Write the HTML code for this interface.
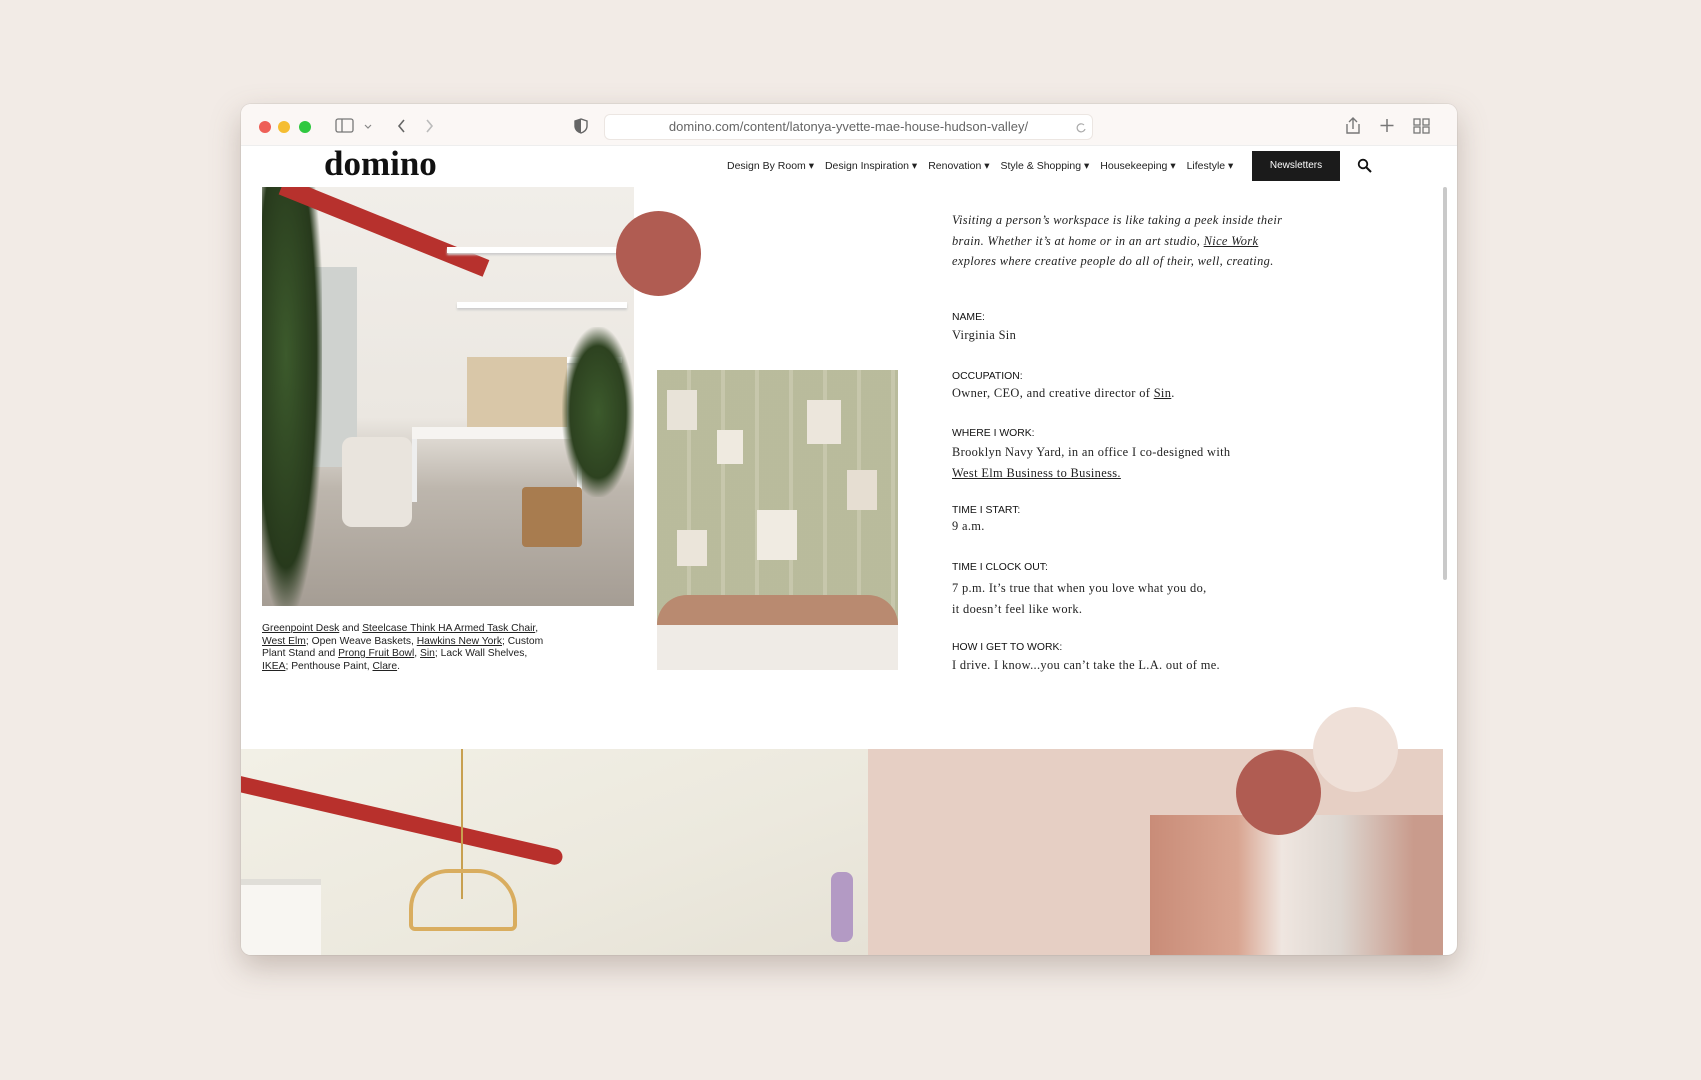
<!DOCTYPE html>
<html><head><meta charset="utf-8"><style>
*{margin:0;padding:0;box-sizing:border-box}
body{width:1701px;height:1080px;background:#f2ebe6;position:relative;overflow:hidden;font-family:"Liberation Sans",sans-serif}
.win{position:absolute;left:241px;top:104px;width:1216px;height:851px;background:#fff;border-radius:10px;overflow:hidden;box-shadow:0 12px 30px rgba(120,100,90,.35),0 0 0 1px rgba(0,0,0,.05)}
.bar{position:absolute;left:0;top:0;width:100%;height:42px;background:#fbf7f5;border-bottom:1px solid #eee}
.dot{position:absolute;top:17px;width:12px;height:12px;border-radius:50%}
.url{position:absolute;left:363px;top:10px;width:489px;height:26px;border-radius:6px;background:#fff;border:1px solid #ece6e2;font-size:13px;color:#666;text-align:center;line-height:24px}
.abs{position:absolute}
.logo{position:absolute;left:83px;top:40px;font-family:"Liberation Serif",serif;font-weight:bold;font-size:35px;color:#111;letter-spacing:0px}
.nav{position:absolute;top:56px;font-size:10.5px;color:#222;white-space:nowrap}
.nav span{margin-right:11px}
.nl{position:absolute;left:1011px;top:47px;width:88px;height:30px;background:#1b1b1b;color:#fff;font-size:10px;text-align:center;line-height:30px}
.txt{position:absolute;left:711px;font-family:"Liberation Serif",serif;font-size:12.4px;color:#222;letter-spacing:0.35px}
.lab{position:absolute;left:711px;font-size:10.4px;color:#111}
u{text-decoration:underline}
.cap{position:absolute;left:21px;top:519px;font-size:10.3px;line-height:12.6px;color:#222;width:285px}
.circ{position:absolute;border-radius:50%}
</style></head><body>
<div class="win">
 <div class="bar">
  <div class="dot" style="left:18px;background:#ee5f57"></div>
  <div class="dot" style="left:37px;background:#f5bd32"></div>
  <div class="dot" style="left:58px;background:#2fc840"></div>
  <svg class="abs" style="left:94px;top:14px" width="40" height="16"><rect x="1" y="1" width="17" height="13" rx="2" fill="none" stroke="#777" stroke-width="1.3"/><line x1="7" y1="1" x2="7" y2="14" stroke="#777" stroke-width="1.3"/><path d="M30 7l3 3 3-3" fill="none" stroke="#888" stroke-width="1.2"/></svg>
  <svg class="abs" style="left:156px;top:14px" width="40" height="16"><path d="M7 2l-5 6 5 6" fill="none" stroke="#666" stroke-width="1.6"/><path d="M30 2l5 6-5 6" fill="none" stroke="#bbb" stroke-width="1.6"/></svg>
  <svg class="abs" style="left:333px;top:14px" width="14" height="16"><path d="M7 1L1 3v5c0 4 3 6 6 7 3-1 6-3 6-7V3z" fill="none" stroke="#666" stroke-width="1.4"/><path d="M7 1v14c-3-1-6-3-6-7V3z" fill="#666"/></svg>
  <div class="url">domino.com/content/latonya-yvette-mae-house-hudson-valley/</div>
  <svg class="abs" style="left:834px;top:18px" width="12" height="12"><path d="M9 3A4 4 0 1 0 10 7" fill="none" stroke="#aaa" stroke-width="1.2"/></svg>
  <svg class="abs" style="left:1100px;top:10px" width="120" height="22"><path d="M12 4v11M8 8l4-4 4 4M6 10v9h12v-9" fill="none" stroke="#777" stroke-width="1.4"/><path d="M46 5v13M39.5 11.5h13" stroke="#777" stroke-width="1.5"/><g fill="none" stroke="#777" stroke-width="1.3"><rect x="73" y="5" width="6" height="6"/><rect x="82" y="5" width="6" height="6"/><rect x="73" y="13" width="6" height="6"/><rect x="82" y="13" width="6" height="6"/></g></svg>
 </div>
 <div class="logo">domino</div>
 <div class="nav" style="left:486px">
  <span>Design By Room ▾</span><span>Design Inspiration ▾</span><span>Renovation ▾</span><span>Style &amp; Shopping ▾</span><span>Housekeeping ▾</span><span>Lifestyle ▾</span>
 </div>
 <div class="nl">Newsletters</div>
 <svg class="abs" style="left:1116px;top:54px" width="16" height="16"><circle cx="6" cy="6" r="4.3" fill="none" stroke="#111" stroke-width="1.8"/><path d="M9 9l5 5" stroke="#111" stroke-width="2"/></svg>
 <div class="abs" style="left:1202px;top:83px;width:4px;height:393px;background:#c9c9c9;border-radius:2px"></div>

 <!-- image 1 -->
 <div class="abs" style="left:21px;top:83px;width:372px;height:419px;background:linear-gradient(180deg,#f1eee9 0%,#ebe7e1 55%,#bdb6ad 72%,#a59d94 100%);overflow:hidden">
  <div class="abs" style="left:0;top:80px;width:95px;height:200px;background:#cfd2cf"></div>
  <div class="abs" style="left:0;top:0;width:60px;height:419px;background:radial-gradient(ellipse at 40% 40%,#3c5a2c,#27391c 60%,transparent 75%)"></div>
  <div class="abs" style="left:20px;top:-10px;width:220px;height:18px;background:#b7312d;transform:rotate(22deg);transform-origin:left"></div>
  <div class="abs" style="left:185px;top:60px;width:180px;height:6px;background:#fff;box-shadow:0 2px 2px #ccc"></div>
  <div class="abs" style="left:195px;top:115px;width:170px;height:6px;background:#fff;box-shadow:0 2px 2px #ccc"></div>
  <div class="abs" style="left:210px;top:170px;width:150px;height:6px;background:#fff;box-shadow:0 2px 2px #ccc"></div>
  <div class="abs" style="left:205px;top:170px;width:100px;height:75px;background:#d9c7a8"></div>
  <div class="abs" style="left:150px;top:245px;width:170px;height:70px;border:5px solid #eee;border-bottom:none;background:transparent"></div>
  <div class="abs" style="left:150px;top:240px;width:170px;height:12px;background:#f6f4f1"></div>
  <div class="abs" style="left:80px;top:250px;width:70px;height:90px;background:#e9e4dd;border-radius:10px"></div>
  <div class="abs" style="left:260px;top:300px;width:60px;height:60px;background:#a87c4f;border-radius:4px"></div>
  <div class="abs" style="left:300px;top:140px;width:72px;height:170px;background:radial-gradient(ellipse,#3c5a2c,#2d4220 55%,transparent 72%)"></div>
 </div>
 <div class="cap"><u>Greenpoint Desk</u> and <u>Steelcase Think HA Armed Task Chair</u>, <u>West Elm</u>; Open Weave Baskets, <u>Hawkins New York</u>; Custom Plant Stand and <u>Prong Fruit Bowl</u>, <u>Sin</u>; Lack Wall Shelves, <u>IKEA</u>; Penthouse Paint, <u>Clare</u>.</div>
 <div class="circ" style="left:375px;top:107px;width:85px;height:85px;background:#b05c52"></div>

 <!-- image 2 -->
 <div class="abs" style="left:416px;top:266px;width:241px;height:300px;background:#bcbea0;overflow:hidden">
  <div class="abs" style="left:0;top:0;width:241px;height:240px;background:repeating-linear-gradient(90deg,#b9bb9c 0 30px,#c8c8ad 30px 34px);opacity:.9"></div>
  <div class="abs" style="left:10px;top:20px;width:30px;height:40px;background:#e8e3d8"></div>
  <div class="abs" style="left:60px;top:60px;width:26px;height:34px;background:#efeae0"></div>
  <div class="abs" style="left:150px;top:30px;width:34px;height:44px;background:#ece6dc"></div>
  <div class="abs" style="left:190px;top:100px;width:30px;height:40px;background:#e6ded2"></div>
  <div class="abs" style="left:100px;top:140px;width:40px;height:50px;background:#f0ebe2"></div>
  <div class="abs" style="left:20px;top:160px;width:30px;height:36px;background:#ebe5da"></div>
  <div class="abs" style="left:0;top:225px;width:241px;height:35px;background:#b98a70;border-radius:30px 30px 0 0"></div>
  <div class="abs" style="left:0;top:255px;width:241px;height:45px;background:#efebe6"></div>
 </div>

 <!-- text -->
 <div class="txt" style="top:106px;line-height:20.5px;font-style:italic;width:350px">Visiting a person’s workspace is like taking a peek inside their brain. Whether it’s at home or in an art studio, <u>Nice Work</u> explores where creative people do all of their, well, creating.</div>
 <div class="lab" style="top:208px">NAME:</div>
 <div class="txt" style="top:224px">Virginia Sin</div>
 <div class="lab" style="top:267px">OCCUPATION:</div>
 <div class="txt" style="top:282px">Owner, CEO, and creative director of <u>Sin</u>.</div>
 <div class="lab" style="top:324px">WHERE I WORK:</div>
 <div class="txt" style="top:338px;line-height:20.5px">Brooklyn Navy Yard, in an office I co-designed with<br><u>West Elm Business to Business.</u></div>
 <div class="lab" style="top:401px">TIME I START:</div>
 <div class="txt" style="top:415px">9 a.m.</div>
 <div class="lab" style="top:458px">TIME I CLOCK OUT:</div>
 <div class="txt" style="top:474px;line-height:20.5px">7 p.m. It’s true that when you love what you do,<br>it doesn’t feel like work.</div>
 <div class="lab" style="top:538px">HOW I GET TO WORK:</div>
 <div class="txt" style="top:554px">I drive. I know...you can’t take the L.A. out of me.</div>

 <!-- bottom -->
 <div class="abs" style="left:0;top:645px;width:627px;height:206px;background:linear-gradient(160deg,#f2f0e6,#ece9de 60%,#e6e2d6);overflow:hidden">
  <div class="abs" style="left:-10px;top:25px;width:340px;height:16px;background:#b8302c;border-radius:8px;transform:rotate(13deg);transform-origin:left"></div>
  <div class="abs" style="left:220px;top:0;width:2px;height:150px;background:#c8a050"></div>
  <div class="abs" style="left:168px;top:120px;width:108px;height:62px;border:4px solid #d9ad5f;border-radius:40px 40px 6px 6px"></div>
  <div class="abs" style="left:0;top:130px;width:80px;height:80px;background:#f8f6f2;border-top:6px solid #e0ded8"></div>
  <div class="abs" style="left:590px;top:123px;width:22px;height:70px;background:#b39ac4;border-radius:8px"></div>
 </div>
 <div class="abs" style="left:627px;top:645px;width:575px;height:206px;background:#e6cfc4"></div>
 <div class="abs" style="left:909px;top:711px;width:293px;height:140px;background:linear-gradient(90deg,#c98c78 0%,#d9a591 30%,#efe6e0 45%,#ddd6d0 65%,#c99b8c 90%)"></div>
 <div class="circ" style="left:1072px;top:603px;width:85px;height:85px;background:#efe0d8"></div>
 <div class="circ" style="left:995px;top:646px;width:85px;height:85px;background:#b05c52"></div>
</div>
</body></html>
